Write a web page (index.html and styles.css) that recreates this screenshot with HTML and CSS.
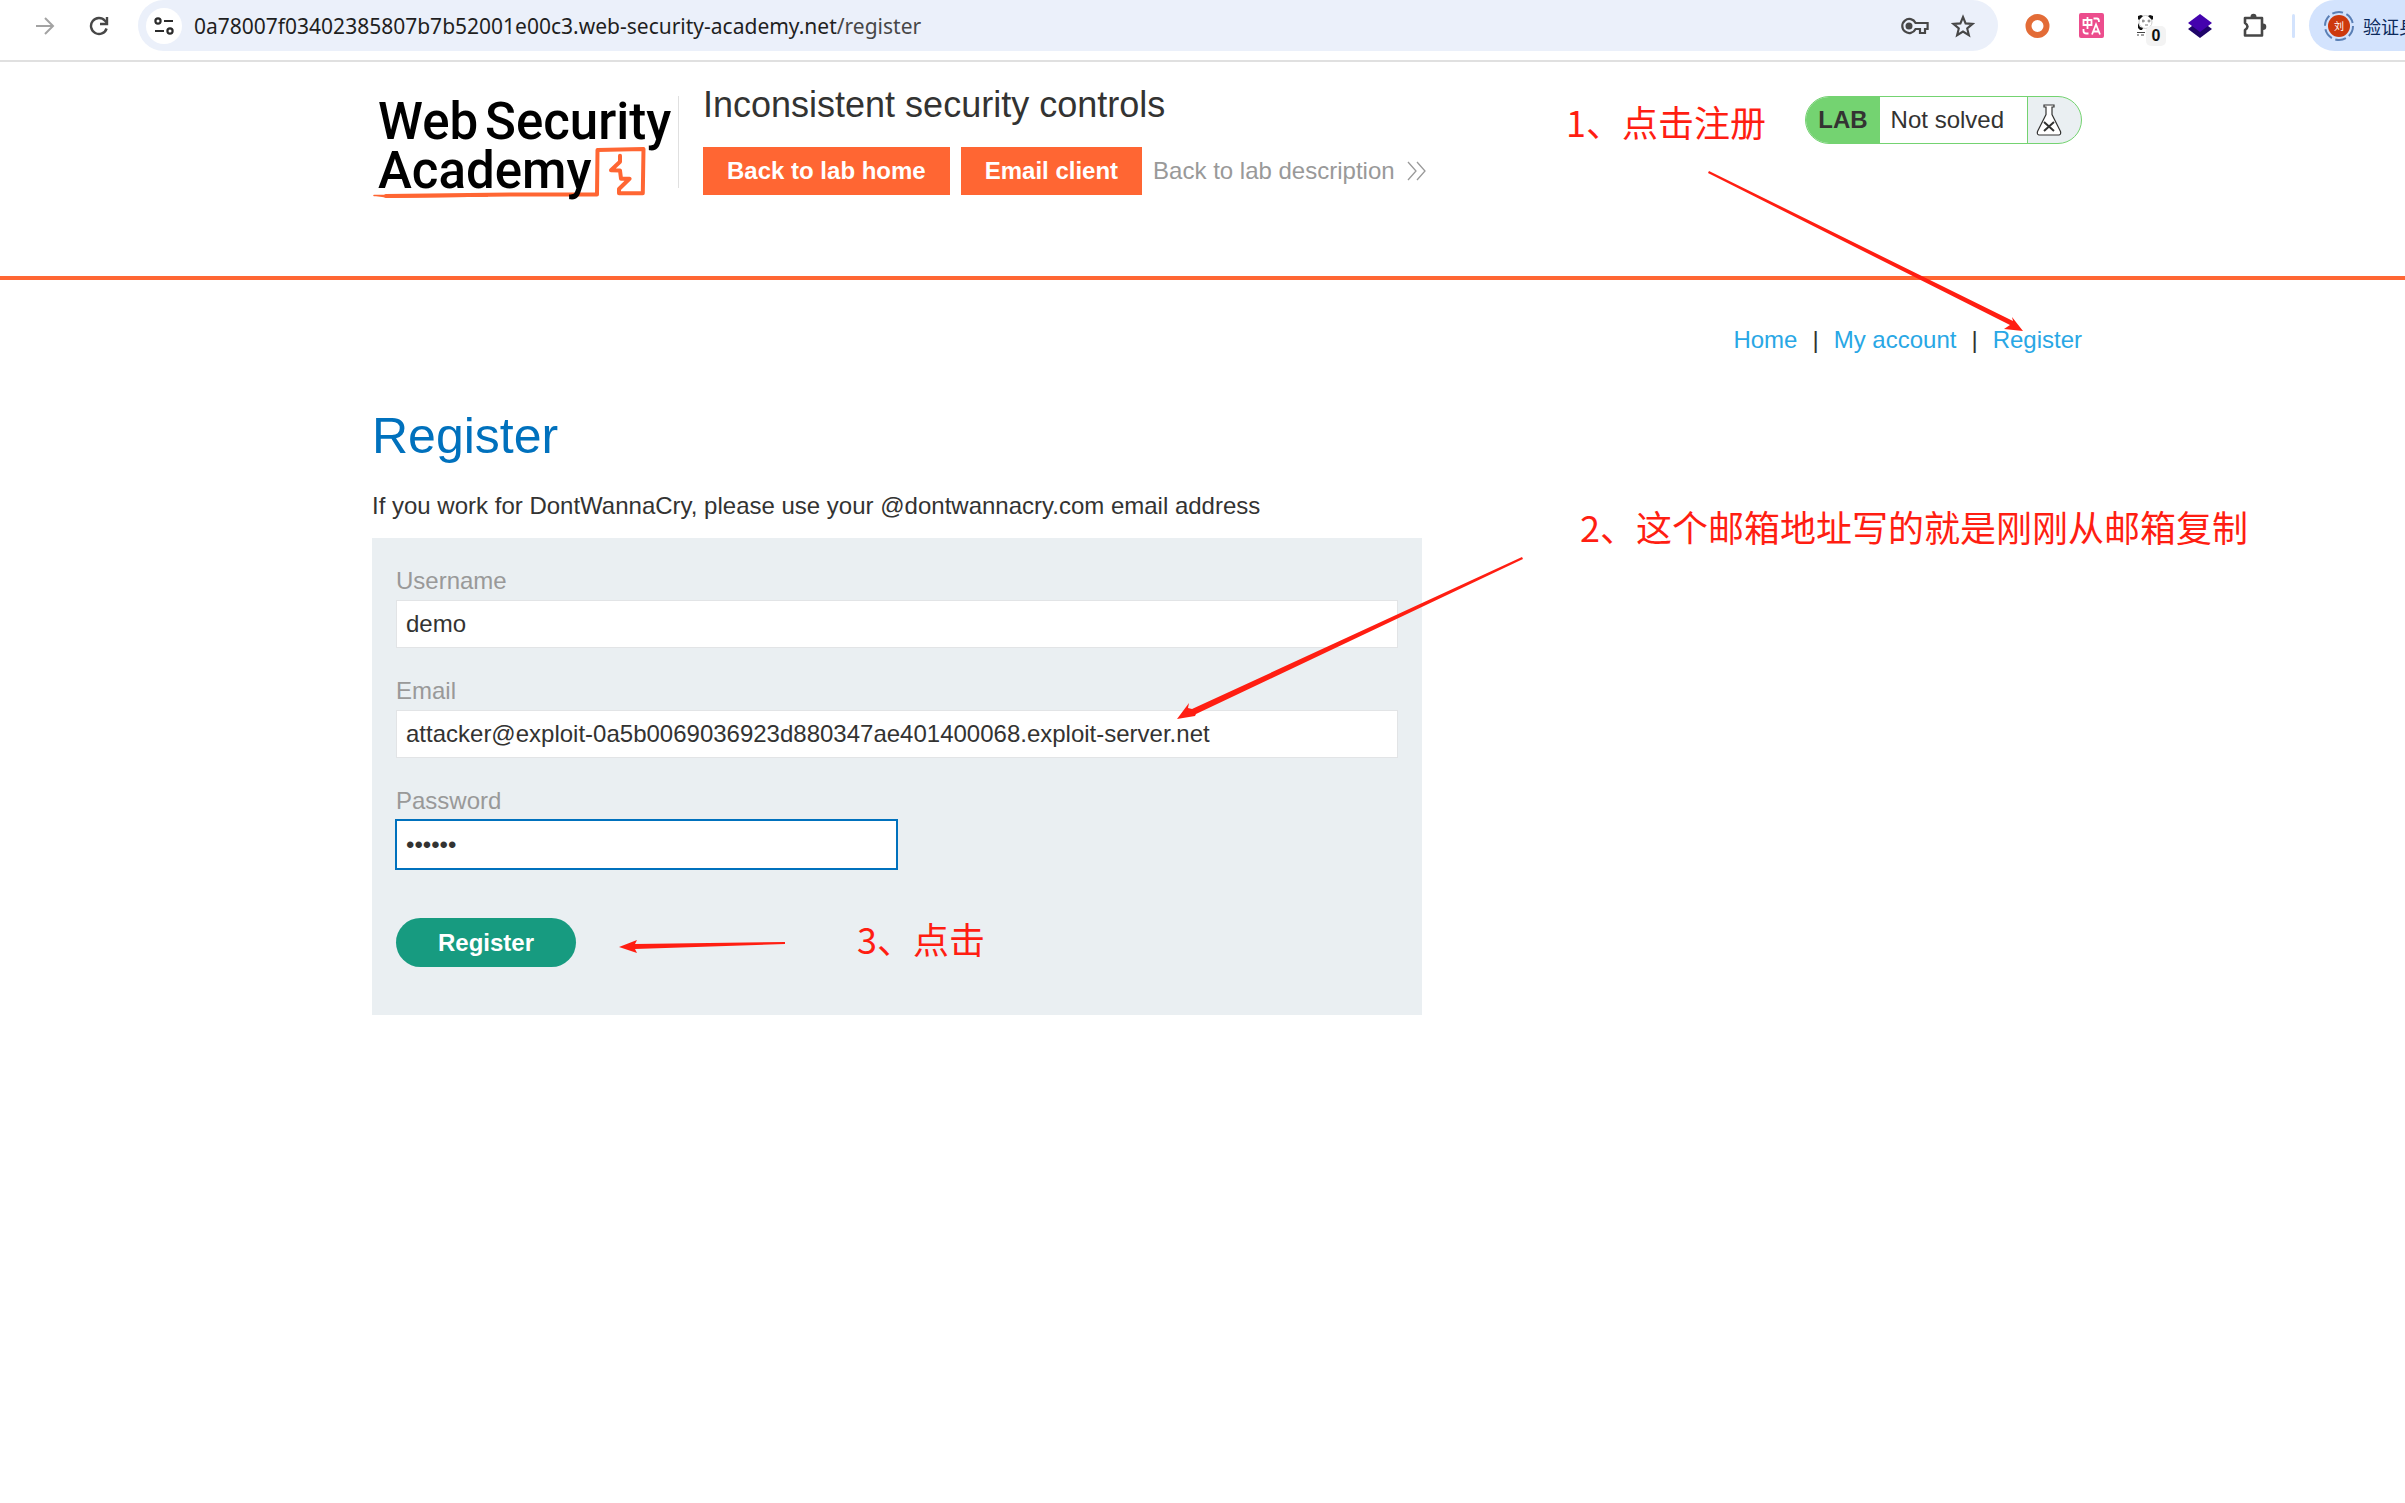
FILE: index.html
```html
<!DOCTYPE html>
<html lang="en">
<head>
	<meta charset="UTF-8">
	<title>Inconsistent security controls</title>
	<link rel="stylesheet" href="styles.css">
</head>
<body>
	<!-- browser bar -->
	<div class="toolbar">
		<button class="tool" type="button" aria-label="Forward">
			<svg width="20" height="20" viewBox="0 0 20 20" fill="none" stroke="#a3a3a3" stroke-width="2"><path d="M1 10h17M10 2l8 8-8 8"/></svg>
		</button>
		<button class="tool reload" type="button" aria-label="Reload">
			<svg width="20" height="20" viewBox="0 0 20 20" fill="none" stroke="#474747" stroke-width="2.4"><path d="M17.6 12.5A8 8 0 1 1 16 4.7L18 7"/><path d="M18 1v7h-7"/></svg>
		</button>
		<div class="omnibox">
			<button class="site" type="button" aria-label="Site information">
				<svg width="20" height="18" viewBox="0 0 20 18" fill="none" stroke="#2b2b2b" stroke-width="2.2"><circle cx="4" cy="4" r="2.6"/><path d="M10 4h9M1 14h9"/><circle cx="16" cy="14" r="2.6"/></svg>
			</button>
			<div class="url">0a78007f03402385807b7b52001e00c3.web-security-academy.net<span>/register</span></div>
			<button class="tool" type="button" aria-label="Passwords">
				<svg width="28" height="18" viewBox="0 0 28 18" fill="none" stroke="#474747" stroke-width="2.2"><path d="M14.6 6A7 7 0 1 0 14.6 12H19v4h5v-4h2.6V6z"/><circle cx="8" cy="9" r="2.4" fill="#474747"/></svg>
			</button>
			<button class="tool" type="button" aria-label="Bookmark">
				<svg width="24" height="24" viewBox="0 0 24 24" fill="none" stroke="#474747" stroke-width="2.1"><path d="M12 3l2.6 6.4 6.9.5-5.3 4.5 1.7 6.8L12 17.5l-5.9 3.7 1.7-6.8L2.5 9.9l6.9-.5z"/></svg>
			</button>
		</div>
		<div class="extensions">
			<svg width="26" height="26" viewBox="0 0 26 26"><circle cx="12.5" cy="13" r="9" fill="none" stroke="#e36c37" stroke-width="6"/></svg>
			<svg width="26" height="26" viewBox="0 0 26 26"><rect width="25" height="25" rx="2" fill="#ec4d8d"/><g fill="none" stroke="#fff" stroke-width="1.8"><path d="M4.500 7h8v5h-8zM8.500 4v12M14.500 5.500h3.500q2 0 2 3.500M4.500 16v2q0 2.500 3 2.500h2M13 21.500l4-10 4 10M14.500 18.500h5"/></g></svg>
			<span class="panda">
				<svg width="26" height="26" viewBox="0 0 26 26"><circle cx="12.500" cy="9" r="6.500" fill="#fff" stroke="#ccc"/><g fill="#111"><path d="M5 6V3l3-1 2 1-4 4zM20 6V3l-3-1-2 1 4 4zM5 10l2 4 3 1-1 2H7l-2-2z"/></g><path d="M9 8h3M14.500 8h3M10 6.500v3M16 6.500v3M12 12h3" stroke="#777" fill="none"/><path d="M4 19.500h8M4 22h2M8 22h3" stroke="#444" fill="none"/></svg>
				<b>0</b>
			</span>
			<svg width="26" height="26" viewBox="0 0 26 26"><path d="M1 16L13 7l12 9-12 9z" fill="#1f0569"/><path d="M1 10L13 1l12 9-12 9z" fill="#4403ae"/></svg>
			<svg width="26" height="26" viewBox="0 0 26 26"><path d="M4 5h17v17.500H4V17q5-3.500 0-7z" fill="none" stroke="#474747" stroke-width="2.600" stroke-linejoin="round"/><path d="M9.500 4a3 3.300 0 0 1 6 0zM22 10.500a3.300 3.200 0 0 1 0 6.400z" fill="#474747"/></svg>
		</div>
		<i class="bar"></i>
		<button class="profile" type="button">
			<svg width="30" height="32" viewBox="0 0 30 32"><circle cx="15" cy="16" r="14" fill="none" stroke="#5a7fb5" stroke-width="2" stroke-dasharray="11 3.660"/><circle cx="15" cy="16" r="11" fill="#cd390d"/><text x="15" y="20" text-anchor="middle" class="avatar">刘</text></svg>
			<span>验证身份</span>
		</button>
	</div>

	<header class="header">
		<svg class="logo" width="306" height="110" viewBox="0 0 306 110" role="img" aria-label="Web Security Academy">
			<g class="logo-text">
				<text x="6" y="49">Web</text>
				<text x="113" y="49">Security</text>
			</g>
			<g fill="none" stroke="#ff6633" stroke-width="4" stroke-linejoin="round" stroke-linecap="round">
				<path d="M14 106l126-1.500h85L225.500 60l46-1-.7 44.300H247V99l10.500-10.300H249l-1-8.200-9-.3 9-8.500v-6"/>
				<path d="M1 105.500l15-.3 100-.2v1.800L16 108z" fill="#ff6633" stroke="none"/>
				<path d="M2 105.500h12" stroke-width="1.500"/>
			</g>
			<text class="logo-text" x="6" y="98">Academy</text>
		</svg>
		<i class="split"></i>
		<div class="title">
			<h2>Inconsistent security controls</h2>
			<div class="links">
				<a class="button" href="#">Back to lab home</a>
				<a class="button" href="#">Email client</a>
				<a class="back" href="#">Back to lab description
					<svg width="20" height="20" viewBox="0 0 20 20" fill="none" stroke="#999" stroke-width="1.300"><path d="M1 1l8 9-8 9M10 1l8 9-8 9"/></svg>
				</a>
			</div>
		</div>
		<div class="status">
			<strong>LAB</strong>
			<span>Not solved</span>
			<svg width="26" height="32" viewBox="0 0 26 32" fill="#fff" stroke="#333332" stroke-width="1.200"><path d="M8 1h10v2h-2v7.500l8.500 17q.8 3-1.500 3.500H3q-2.300-.5-1.500-3.500l8.500-17V3H8z"/><path d="M8 18l10 9M18 18L8 27" stroke-width="2"/></svg>
		</div>
	</header>

	<main class="content">
		<nav class="nav">
			<a href="#">Home</a><span>|</span>
			<a href="#">My account</a><span>|</span>
			<a href="#">Register</a>
		</nav>
		<h1>Register</h1>
		<p>If you work for DontWannaCry, please use your @dontwannacry.com email address</p>
		<form class="form">
			<label for="username">Username</label>
			<input id="username" type="text" value="demo">
			<label for="email">Email</label>
			<input id="email" type="text" value="attacker@exploit-0a5b0069036923d880347ae401400068.exploit-server.net">
			<label for="password">Password</label>
			<input id="password" class="active" type="password" value="secret">
			<button type="button">Register</button>
		</form>
	</main>

	<!-- notes drawn over the page -->
	<div class="note note1">1、点击注册</div>
	<div class="note note2">2、这个邮箱地址写的就是刚刚从邮箱复制</div>
	<div class="note note3">3、点击</div>
	<svg class="arrow arrow1" width="318" height="164" viewBox="0 0 318 164"><path d="M2 0L1 2l302 152-6 4 19 2-11-14 1 4z"/></svg>
	<svg class="arrow arrow2" width="348" height="166" viewBox="0 0 348 166"><path d="M345 1l1 2L19 158l-1 2-18 3 12-16-1 5 4 1z"/></svg>
	<svg class="arrow arrow3" width="168" height="16" viewBox="0 0 168 16"><path d="M166 3v2L16 10l2 4-18-6 18-7-2 4z"/></svg>
</body>
</html>
```
FILE: styles.css
```css
*{
	box-sizing:border-box;
}
body{
	margin:0;
	position:relative;
	overflow-x:hidden;
	background:#fff;
	color:#333332;
	font:24px/28px "Liberation Sans",Arial,sans-serif;
}
a{
	text-decoration:none;
}
h1,h2,p{
	margin:0;
	font-weight:normal;
}
button{
	border:0;
	padding:0;
	background:none;
	font-family:inherit;
}
svg{
	display:block;
	flex:none;
}

/* browser bar */
.toolbar{
	display:flex;
	height:62px;
	padding:0 0 9px 35px;
	border-bottom:2px solid #e0e0e0;
	overflow:hidden;
}
.tool{
	flex:none;
}
.reload{
	margin:0 29px 0 34px;
}
.omnibox{
	flex:1;
	display:flex;
	align-items:center;
	gap:22px;
	min-width:0;
	padding:0 23px 0 8px;
	border-radius:26px;
	background:#ebf0fa;
}
.site{
	display:flex;
	align-items:center;
	justify-content:center;
	flex:none;
	width:36px;
	height:36px;
	border-radius:50%;
	background:#fff;
}
.url{
	flex:1;
	margin-left:-10px;
	overflow:hidden;
	white-space:nowrap;
	color:#1f1f1f;
	font:21px/30px "Noto Sans",sans-serif;
}
.url span{
	color:#474747;
}
.extensions{
	display:flex;
	align-items:center;
	gap:28px;
	margin:0 25px 0 27px;
}
.panda{
	position:relative;
}
.panda b{
	position:absolute;
	left:13px;
	top:13px;
	width:20px;
	border-radius:5px;
	background:#f3f3f3;
	color:#111;
	font-size:16px;
	line-height:20px;
	text-align:center;
}
.bar{
	align-self:center;
	flex:none;
	width:3px;
	height:24px;
	margin-right:14px;
	border-radius:2px;
	background:#d3e3fd;
}
.profile{
	display:flex;
	align-items:center;
	gap:9px;
	flex:none;
	width:96px;
	padding-left:15px;
	border-radius:26px 0 0 26px;
	background:#d3e3fd;
	color:#0b2a5c;
	font:18px/26px "Noto Sans CJK SC",sans-serif;
	white-space:nowrap;
	overflow:hidden;
}
.avatar{
	fill:#fff;
	font-size:10px;
}

/* lab header */
.header{
	display:flex;
	align-items:flex-start;
	height:218px;
	padding:22px 323px 0 372px;
	border-bottom:4px solid #ff6633;
}
.logo{
	margin-top:6px;
}
.logo-text{
	fill:#000;
	font:500 51px Roboto,sans-serif;
}
.split{
	width:1px;
	height:92px;
	margin:12px 24px 0 0;
	background:#e0e0e0;
}
.title h2{
	font-size:36px;
	line-height:42px;
}
.links{
	display:flex;
	gap:11px;
	margin-top:21px;
	line-height:48px;
}
.button{
	padding:0 24px;
	background:#ff6633;
	color:#fff;
	font-weight:bold;
}
.back{
	display:flex;
	align-items:center;
	gap:12px;
	color:#999;
}
.status{
	display:flex;
	align-items:center;
	height:48px;
	margin:12px 0 0 auto;
	padding-right:19px;
	border:1px solid #74d371;
	border-radius:24px;
	background:#eaeff2;
	line-height:46px;
	overflow:hidden;
}
.status strong{
	padding:0 12px;
	background:#74d371;
}
.status span{
	margin-right:8px;
	padding:0 23px 0 11px;
	border-right:1px solid #74d371;
	background:#fff;
}

/* register page */
.content{
	padding:46px 323px 48px 372px;
}
.nav{
	display:flex;
	justify-content:flex-end;
	gap:15px;
}
.nav a{
	color:#29a7e5;
}
.content h1{
	margin-top:53px;
	color:#0071bd;
	font-size:50px;
	line-height:58px;
}
.content p{
	margin-top:27px;
}
.form{
	max-width:1050px;
	margin-top:18px;
	padding:29px 24px 48px;
	background:#eaeff2;
}
.form label{
	display:block;
	color:#999;
}
.form input{
	display:block;
	width:100%;
	height:48px;
	margin:5px 0 29px;
	padding:0 9px;
	border:1px solid #e2e4e6;
	border-radius:0;
	background:#fff;
	color:#333332;
	font:inherit;
}
.form .active{
	width:50%;
	height:49px;
	margin-bottom:49px;
	border-color:#0071bd;
	box-shadow:0 0 0 1px #0071bd;
}
.form button{
	display:block;
	height:49px;
	padding:0 42px;
	border-radius:25px;
	background:#179b80;
	color:#fff;
	font-size:24px;
	font-weight:bold;
}

/* notes */
.note{
	position:absolute;
	color:#ff1e12;
	font:36px/48px "Noto Sans CJK SC",sans-serif;
	white-space:nowrap;
}
.note1{
	left:1566px;
	top:97px;
}
.note2{
	left:1580px;
	top:502px;
}
.note3{
	left:857px;
	top:914px;
}
.arrow{
	position:absolute;
	fill:#ff1e12;
}
.arrow1{
	left:1707px;
	top:171px;
}
.arrow2{
	left:1177px;
	top:556px;
}
.arrow3{
	left:619px;
	top:939px;
}
```
